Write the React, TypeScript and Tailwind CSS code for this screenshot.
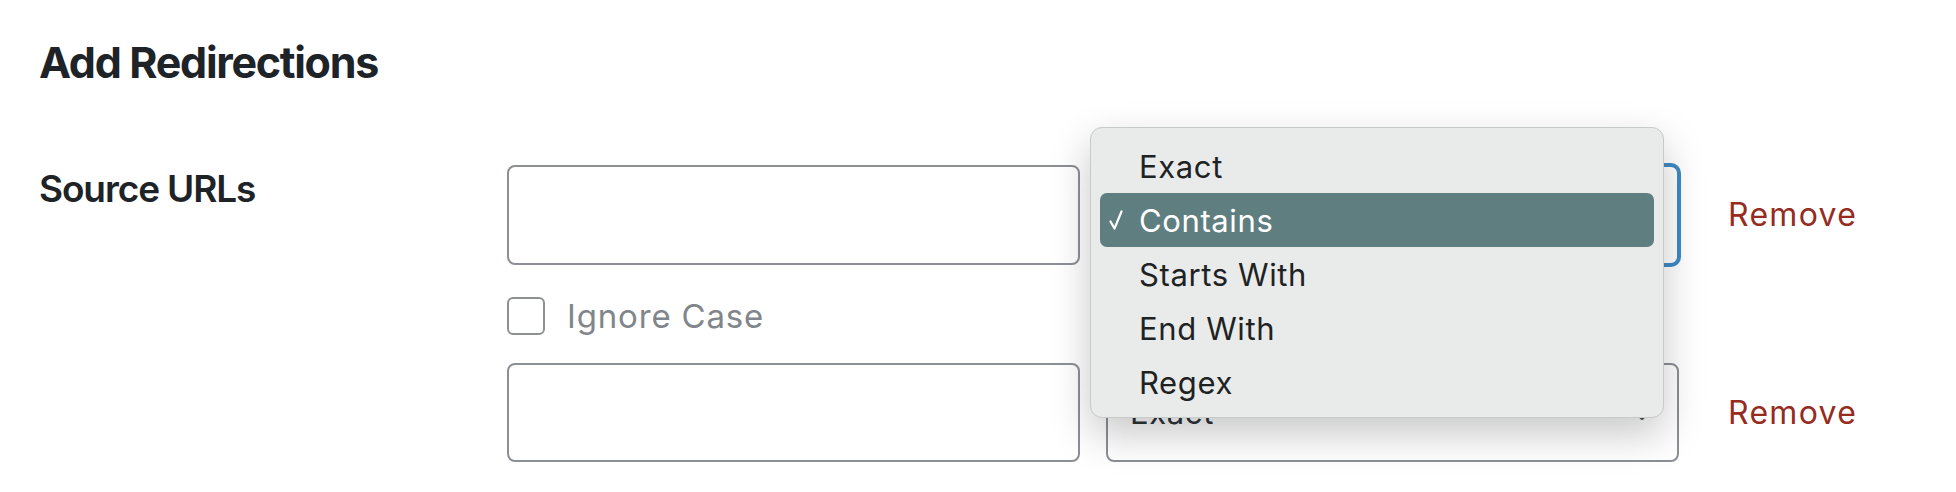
import React from 'react';

const options = ['Exact', 'Contains', 'Starts With', 'End With', 'Regex'];

function CheckMark() {
  return (
    <svg width="14" height="20" viewBox="0 0 14 20" fill="none">
      <path d="M1.5 11.5 L5.5 18.5 L12.5 1.5" stroke="white" strokeWidth="2.2" strokeLinecap="round" strokeLinejoin="round" />
    </svg>
  );
}

function Chevron() {
  return (
    <svg width="26" height="18" viewBox="0 0 26 18" fill="none">
      <path d="M3 3 L13 14 L23 3" stroke="#50575e" strokeWidth="4" strokeLinejoin="round" />
    </svg>
  );
}

function Remove() {
  return <span className="ml-[49px] text-[32px] leading-none tracking-[0.04em] text-[#962b20]">Remove</span>;
}

export default function App() {
  return (
    <div className="min-h-screen bg-white pl-[39px] pt-[41px] font-['Inter',sans-serif] text-[#1d2327]">
      <h2 className="text-[43px] font-bold leading-none tracking-[-0.03em]">Add Redirections</h2>

      <div className="mt-[81px] flex">
        <div className="w-[468px] pt-[5px] text-[37px] font-semibold leading-none tracking-[-0.03em]">Source URLs</div>

        <div className="flex flex-col">
          {/* first source url */}
          <div className="flex h-[100px] items-center">
            <div className="h-full w-[573px] rounded-[8px] border-2 border-[#8c8f94] bg-white" />
            <div className="relative ml-[26px] h-full w-[573px] rounded-[8px] border-2 border-[#3f8ac6] bg-white shadow-[0_0_0_2px_#3f8ac6]">
              <div className="absolute left-[-18px] top-[-40px] z-10 h-[291px] w-[574px] rounded-[12px] border border-[#c6cac9] bg-[#e8ebea] px-[9px] pt-[11px] shadow-[0_16px_40px_rgba(0,0,0,0.22)]">
                {options.map((o) => (
                  <div
                    key={o}
                    className={
                      o === 'Contains'
                        ? 'flex h-[54px] items-center rounded-[7px] bg-[#5f7e80] text-white'
                        : 'flex h-[54px] items-center text-[#1f2223]'
                    }
                  >
                    <span className="flex w-[39px] justify-start pl-[9px]">{o === 'Contains' && <CheckMark />}</span>
                    <span className="text-[31px] leading-none tracking-[0.02em]">{o}</span>
                  </div>
                ))}
              </div>
            </div>
            <Remove />
          </div>

          <label className="mt-[32px] flex h-[38px] items-center">
            <span className="h-[38px] w-[38px] rounded-[6px] border-2 border-[#8c8f94] bg-white" />
            <span className="ml-[22px] text-[33px] leading-none tracking-[0.025em] text-[#80868b]">Ignore Case</span>
          </label>

          {/* second source url */}
          <div className="mt-[28px] flex h-[99px] items-center">
            <div className="h-full w-[573px] rounded-[8px] border-2 border-[#8c8f94] bg-white" />
            <div className="ml-[26px] flex h-full w-[573px] items-center justify-between rounded-[8px] border-2 border-[#8c8f94] bg-white pl-[22px] pr-[22px]">
              <span className="text-[31px] leading-none tracking-[0.02em] text-[#2c3338]">Exact</span>
              <Chevron />
            </div>
            <Remove />
          </div>
        </div>
      </div>
    </div>
  );
}
